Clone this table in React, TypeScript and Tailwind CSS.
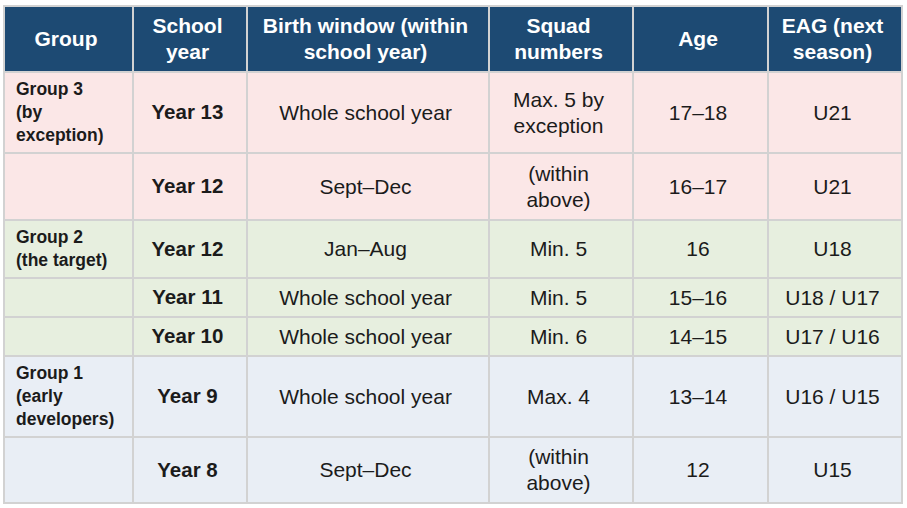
const HEAD = ["Group", "School year", "Birth window (within school year)", "Squad numbers", "Age", "EAG (next season)"];

type Row = {
  group?: string[];
  year: string;
  window: string;
  squad: string[];
  age: string;
  eag: string;
  bg: string;
  h: string;
};

const ROWS: Row[] = [
  { group: ["Group 3", "(by", "exception)"], year: "Year 13", window: "Whole school year", squad: ["Max. 5 by", "exception"], age: "17–18", eag: "U21", bg: "bg-[#fbe7e7]", h: "h-[81px]" },
  { year: "Year 12", window: "Sept–Dec", squad: ["(within", "above)"], age: "16–17", eag: "U21", bg: "bg-[#fbe7e7]", h: "h-[67px]" },
  { group: ["Group 2", "(the target)"], year: "Year 12", window: "Jan–Aug", squad: ["Min. 5"], age: "16", eag: "U18", bg: "bg-[#e7efdf]", h: "h-[58px]" },
  { year: "Year 11", window: "Whole school year", squad: ["Min. 5"], age: "15–16", eag: "U18 / U17", bg: "bg-[#e7efdf]", h: "h-[39px]" },
  { year: "Year 10", window: "Whole school year", squad: ["Min. 6"], age: "14–15", eag: "U17 / U16", bg: "bg-[#e7efdf]", h: "h-[39px]" },
  { group: ["Group 1", "(early", "developers)"], year: "Year 9", window: "Whole school year", squad: ["Max. 4"], age: "13–14", eag: "U16 / U15", bg: "bg-[#e9eef5]", h: "h-[81px]" },
  { year: "Year 8", window: "Sept–Dec", squad: ["(within", "above)"], age: "12", eag: "U15", bg: "bg-[#e9eef5]", h: "h-[66px]" },
];

const HEAD_WRAP: Record<string, string[]> = {
  "School year": ["School", "year"],
  "Birth window (within school year)": ["Birth window (within", "school year)"],
  "Squad numbers": ["Squad", "numbers"],
  "EAG (next season)": ["EAG (next", "season)"],
};

const cell = "border-2 border-[#d2d2d2] text-center align-middle pl-0 pr-[5px]";

export default function App() {
  return (
    <div className="bg-white w-[907px] h-[508px] pt-[5px] pl-[3px] font-['Liberation_Sans',Arial,sans-serif] text-[#1b1b1b]">
      <table className="border-collapse table-fixed w-[898px]">
        <colgroup>
          <col className="w-[129px]" />
          <col className="w-[114px]" />
          <col className="w-[242px]" />
          <col className="w-[144px]" />
          <col className="w-[135px]" />
          <col className="w-[134px]" />
        </colgroup>
        <thead>
          <tr className="h-[66px] bg-[#1d4a73]">
            {HEAD.map((h) => (
              <th key={h} className={`${cell} text-white font-bold text-[21px] leading-[26px]`}>
                {(HEAD_WRAP[h] || [h]).map((l) => (
                  <div key={l}>{l}</div>
                ))}
              </th>
            ))}
          </tr>
        </thead>
        <tbody>
          {ROWS.map((r, i) => (
            <tr key={i} className={`${r.bg} ${r.h}`}>
              <td className="border-2 border-[#d2d2d2] pl-[11px] pr-1 align-middle font-bold text-[17.5px] leading-[23px]">
                {r.group?.map((l) => (
                  <div key={l}>{l}</div>
                ))}
              </td>
              <td className={`${cell} font-bold text-[20.5px]`}>{r.year}</td>
              <td className={`${cell} text-[21px]`}>{r.window}</td>
              <td className={`${cell} text-[21px] leading-[26px]`}>
                {r.squad.map((l) => (
                  <div key={l}>{l}</div>
                ))}
              </td>
              <td className={`${cell} text-[21px]`}>{r.age}</td>
              <td className={`${cell} text-[21px]`}>{r.eag}</td>
            </tr>
          ))}
        </tbody>
      </table>
    </div>
  );
}
